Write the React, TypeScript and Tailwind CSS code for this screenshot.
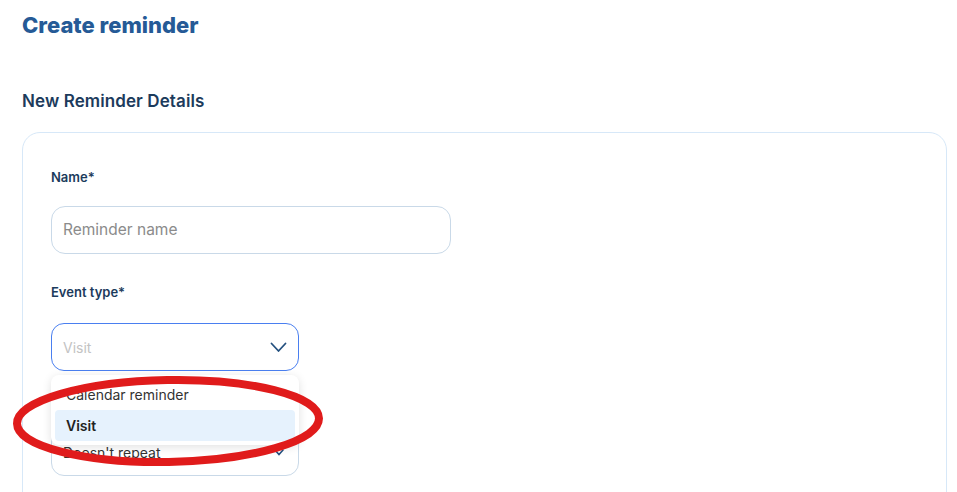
import React from 'react';

function Chevron({ className }: { className?: string }) {
  return (
    <svg className={className} width="17" height="11" viewBox="0 0 17 11" fill="none">
      <path d="M1.5 1.5L8.5 9L15.5 1.5" stroke="#24507f" strokeWidth="1.8" strokeLinecap="round" strokeLinejoin="round" />
    </svg>
  );
}

export default function App() {
  return (
    <div className="relative h-[492px] w-full overflow-hidden bg-white font-['Inter',sans-serif]">
      <div className="pl-[22px] pr-[10px] pt-[11px]">
        <h1 className="text-[22px] font-extrabold leading-[28px] text-[#255a96] tracking-[0px]">Create reminder</h1>
        <h2 className="mt-[51px] text-[17px] font-semibold leading-[22px] text-[#1c3b5c] tracking-[0.1px]">
          New Reminder Details
        </h2>

        <div className="mt-[20px] h-[420px] rounded-[18px] border border-[#d7e8f8] px-[28px] pt-[35px]">
          <div className="text-[13px] font-semibold leading-[18px] text-[#1c3b5c]">Name*</div>
          <div className="mt-[20px] flex h-[48px] w-[400px] items-center rounded-[14px] border border-[#c9d9e8] px-[11px]">
            <span className="text-[15.5px] text-[#8b8b8b]">Reminder name</span>
          </div>

          <div className="mt-[29px] text-[13px] font-semibold leading-[18px] text-[#1c3b5c]">Event type*</div>
          <div className="relative mt-[22px] w-[248px]">
            <div className="flex h-[48px] items-center justify-between rounded-[13px] border border-[#4a7ff0] pl-[11px] pr-[11px]">
              <span className="text-[14px] text-[#c3c3c3]">Visit</span>
              <Chevron />
            </div>

            <div className="mt-[58px] flex h-[47px] items-center justify-between rounded-[13px] border border-[#c9d9e8] pl-[11px] pr-[14px]">
              <span className="text-[14px] text-[#333]">Doesn&apos;t repeat</span>
              <svg width="10" height="7" viewBox="0 0 10 7" fill="none">
                <path d="M1 1L5 5.5L9 1" stroke="#24507f" strokeWidth="1.6" strokeLinecap="round" />
              </svg>
            </div>

            <div className="absolute left-0 top-[52px] w-[248px] rounded-[8px] bg-white p-[4px] shadow-[0_2px_10px_rgba(0,0,0,0.12)]">
              <div className="flex h-[31px] items-center px-[11px] text-[14px] text-[#333]">Calendar reminder</div>
              <div className="flex h-[31px] items-center rounded-[4px] bg-[#e6f2fd] px-[11px] text-[14px] font-semibold text-[#222]">
                Visit
              </div>
            </div>
          </div>
        </div>
      </div>

      <svg className="pointer-events-none absolute left-0 top-0" width="957" height="492" viewBox="0 0 957 492">
        <ellipse cx="168" cy="421" rx="151" ry="41" fill="none" stroke="#e01b1b" strokeWidth="8" transform="rotate(-1 168 421)" />
      </svg>
    </div>
  );
}
